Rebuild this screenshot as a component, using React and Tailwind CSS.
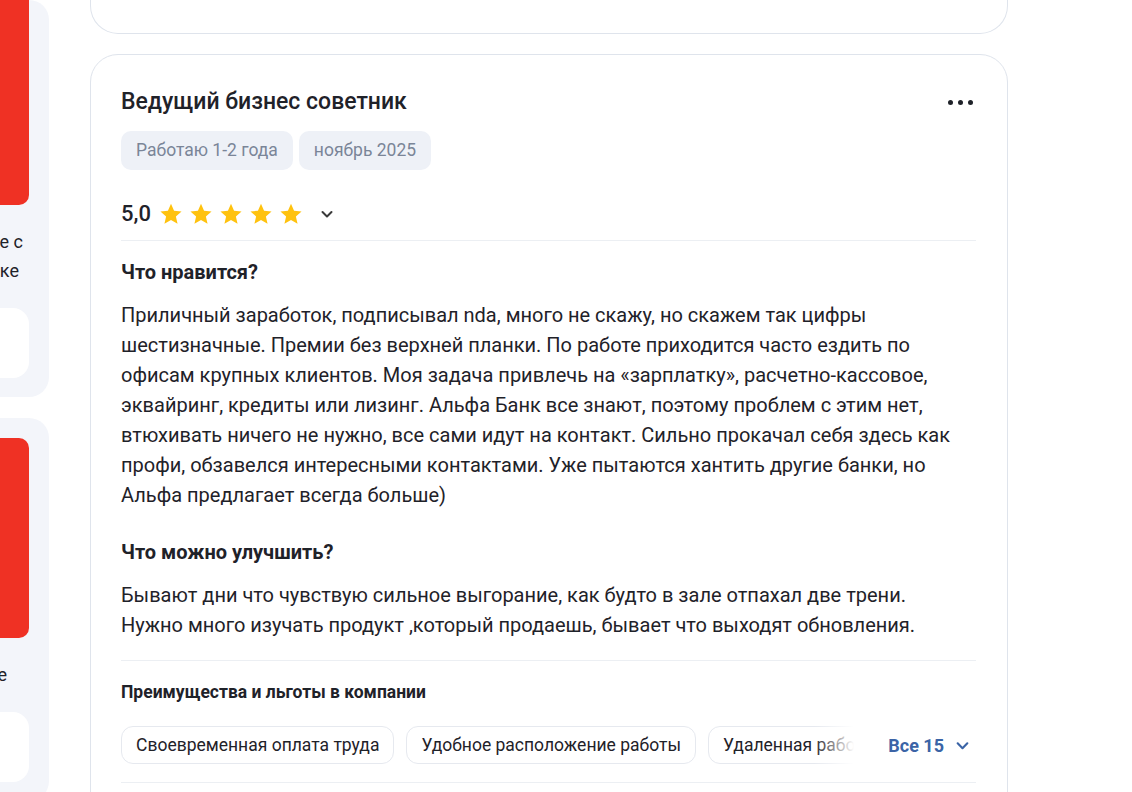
import React from "react";

const likes = [
  "Приличный заработок, подписывал nda, много не скажу, но скажем так цифры",
  "шестизначные. Премии без верхней планки. По работе приходится часто ездить по",
  "офисам крупных клиентов. Моя задача привлечь на «зарплатку», расчетно-кассовое,",
  "эквайринг, кредиты или лизинг. Альфа Банк все знают, поэтому проблем с этим нет,",
  "втюхивать ничего не нужно, все сами идут на контакт. Сильно прокачал себя здесь как",
  "профи, обзавелся интересными контактами. Уже пытаются хантить другие банки, но",
  "Альфа предлагает всегда больше)",
];

const improve = [
  "Бывают дни что чувствую сильное выгорание, как будто в зале отпахал две трени.",
  "Нужно много изучать продукт ,который продаешь, бывает что выходят обновления.",
];

const perks = ["Своевременная оплата труда", "Удобное расположение работы", "Удаленная работа"];

function Star() {
  return (
    <svg width="24" height="24" viewBox="0 0 24 24" className="shrink-0">
      <path
        d="M12 1.8l3.05 6.9 7.5.7-5.66 4.98 1.68 7.36L12 17.9l-6.57 3.84 1.68-7.36L1.45 9.4l7.5-.7z"
        fill="#ffc20e"
      />
    </svg>
  );
}

function Chevron({ color = "#3a3a3a", size = 14 }) {
  return (
    <svg width={size} height={size} viewBox="0 0 14 14" fill="none">
      <path d="M2.5 5l4.5 4.5L11.5 5" stroke={color} strokeWidth="2" strokeLinecap="round" strokeLinejoin="round" />
    </svg>
  );
}

function SideCard({ first, line1, line2, pad1, pad2 }) {
  return (
    <div className={`w-[49px] bg-[#f3f5fa] rounded-r-[20px] pb-[19px] ${first ? "pt-0" : "pt-[20px]"}`}>
      <div className={`w-[29px] h-[200px] bg-[#ef3124] rounded-r-[10px] ${first ? "h-[205px] rounded-tr-none" : ""}`} />
      <div className="mt-[22px] text-[18px] leading-[29px] text-[#1f2229] whitespace-nowrap">
        <div className={`flex justify-end overflow-hidden ${pad1}`}>{line1}</div>
        {line2 && <div className={`flex justify-end overflow-hidden ${pad2}`}>{line2}</div>}
      </div>
      <div className="mt-[23px] w-[29px] h-[70px] bg-white rounded-r-[16px]" />
    </div>
  );
}

export default function App() {
  return (
    <div className="w-[1132px] h-[792px] overflow-hidden bg-white flex font-['Roboto',sans-serif] text-[#1f2229]">
      <div className="flex flex-col gap-[21px] shrink-0">
        <SideCard first line1="в офисе с" line2="поддержке" pad1="pr-[26px]" pad2="pr-[30px]" />
        <SideCard line1="работе" pad1="pr-[42px]" />
      </div>

      <div className="ml-[41px] w-[918px] shrink-0">
        <div className="h-[34px] border-x border-b border-[#dfe4ec] rounded-b-[28px]" />

        <div className="mt-[20px] border border-[#dfe4ec] rounded-[28px] pt-[33px] pl-[30px] pr-[31px]">
          <div className="flex items-center justify-between">
            <h2 className="text-[23px] leading-[28px] font-medium">Ведущий бизнес советник</h2>
            <div className="flex gap-[5px] mr-[3px]">
              <span className="w-[5px] h-[5px] rounded-full bg-[#1f2229]" />
              <span className="w-[5px] h-[5px] rounded-full bg-[#1f2229]" />
              <span className="w-[5px] h-[5px] rounded-full bg-[#1f2229]" />
            </div>
          </div>

          <div className="mt-[15px] flex gap-[6px]">
            <span className="h-[39px] px-[15px] flex items-center rounded-[10px] bg-[#eef1f7] text-[#7a8598] text-[17.5px]">
              Работаю 1-2 года
            </span>
            <span className="h-[39px] px-[15px] flex items-center rounded-[10px] bg-[#eef1f7] text-[#7a8598] text-[17.5px]">
              ноябрь 2025
            </span>
          </div>

          <div className="mt-[29px] h-[30px] flex items-center">
            <span className="text-[22px] leading-[30px] mr-[8px] font-medium">5,0</span>
            <div className="flex gap-[6px]">
              <Star />
              <Star />
              <Star />
              <Star />
              <Star />
            </div>
            <span className="ml-[17px]">
              <Chevron />
            </span>
          </div>

          <div className="mt-[11px] border-t border-[#eceff3]" />

          <h3 className="mt-[20px] text-[20px] leading-[22px] font-bold">Что нравится?</h3>
          <div className="mt-[17px] text-[20px] leading-[30px]">
            {likes.map((l) => (
              <div key={l} className="whitespace-nowrap">{l}</div>
            ))}
          </div>

          <h3 className="mt-[31px] text-[20px] leading-[22px] font-bold">Что можно улучшить?</h3>
          <div className="mt-[17px] text-[20px] leading-[30px]">
            {improve.map((l) => (
              <div key={l} className="whitespace-nowrap">{l}</div>
            ))}
          </div>

          <div className="mt-[20px] border-t border-[#eceff3]" />

          <h4 className="mt-[21px] text-[17.5px] leading-[20px] font-bold">Преимущества и льготы в компании</h4>

          <div className="mt-[24px] flex items-center">
            <div className="relative flex-1 overflow-hidden">
              <div className="flex gap-[12px]">
                {perks.map((p) => (
                  <span
                    key={p}
                    className="shrink-0 h-[38px] px-[14px] flex items-center rounded-[12px] border border-[#e6e9ef] text-[17.5px] whitespace-nowrap"
                  >
                    {p}
                  </span>
                ))}
              </div>
              <div className="absolute right-0 top-0 h-full w-[40px] bg-gradient-to-r from-white/0 to-white" />
            </div>
            <button className="ml-[34px] mr-[6px] flex items-center gap-[11px] text-[18px] font-bold text-[#3b64a6]">
              Все 15
              <Chevron color="#3b64a6" size={15} />
            </button>
          </div>

          <div className="mt-[18px] border-t border-[#eceff3]" />
          <div className="h-[40px]" />
        </div>
      </div>
    </div>
  );
}
